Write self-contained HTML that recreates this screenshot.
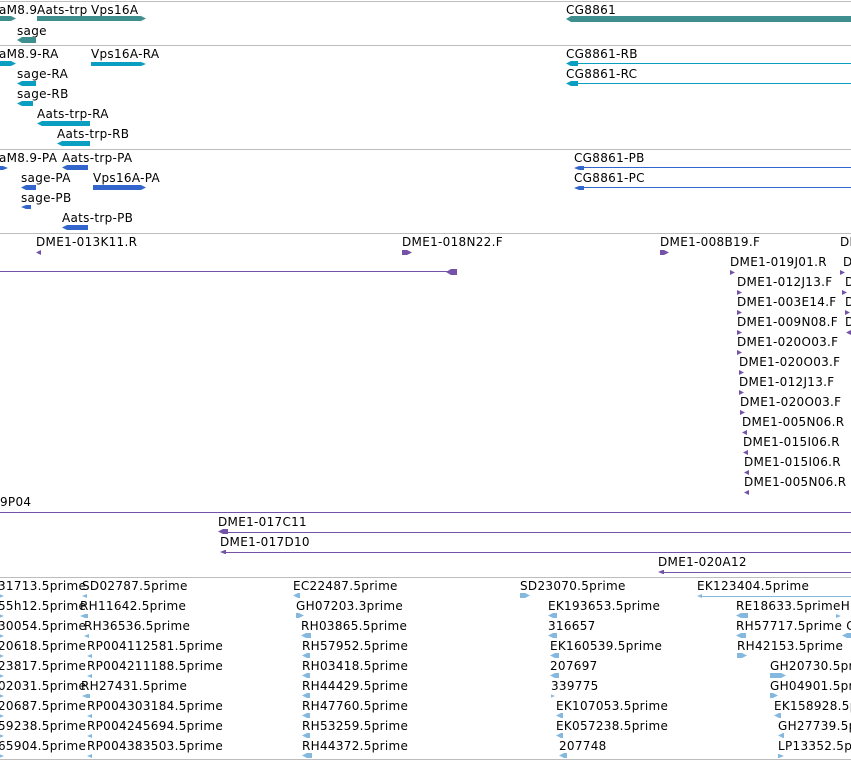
<!DOCTYPE html>
<html><head><meta charset="utf-8"><style>
body{margin:0;width:851px;height:761px;overflow:hidden;background:#fff;position:relative;font-family:"DejaVu Sans","Liberation Sans",sans-serif;}
.t{position:absolute;font-size:12px;line-height:14px;color:#000;white-space:nowrap;letter-spacing:0.3px;margin-top:1px;}
.s{position:absolute;height:1px;left:0;width:851px;background:#bdbdbd;}
.b{position:absolute;}
.g{background:#3f8f8f}.r{background:#0a9ec0}.p{background:#3366cc}.c{background:#7452a8}.e{background:#85b8de}
.ra{clip-path:polygon(0 0,calc(100% - 5px) 0,100% 50%,calc(100% - 5px) 100%,0 100%)}
.la{clip-path:polygon(5px 0,100% 0,100% 100%,5px 100%,0 50%)}
</style></head><body>
<div class="s" style="top:1px"></div>
<div class="s" style="top:45px"></div>
<div class="s" style="top:149px"></div>
<div class="s" style="top:233px"></div>
<div class="s" style="top:577px"></div>
<div class="s" style="top:759px"></div>

<div class="t" style="left:-1px;top:2px">aM8.9</div>
<div class="t" style="left:37px;top:2px">Aats-trp</div>
<div class="t" style="left:91px;top:2px">Vps16A</div>
<div class="b g ra" style="left:0;top:16px;width:16px;height:5px"></div>
<div class="b g ra" style="left:37px;top:16px;width:109px;height:5px"></div>
<div class="t" style="left:17px;top:23px">sage</div>
<div class="b g la" style="left:17px;top:37px;width:19px;height:6px"></div>
<div class="t" style="left:566px;top:2px">CG8861</div>
<div class="b g la" style="left:566px;top:16px;width:285px;height:6px"></div>

<div class="t" style="left:-1px;top:46px">aM8.9-RA</div>
<div class="b r ra" style="left:0;top:61px;width:16px;height:5px"></div>
<div class="t" style="left:91px;top:46px">Vps16A-RA</div>
<div class="b r ra" style="left:91px;top:62px;width:55px;height:4px"></div>
<div class="t" style="left:17px;top:66px">sage-RA</div>
<div class="b r la" style="left:17px;top:81px;width:19px;height:5px"></div>
<div class="t" style="left:17px;top:86px">sage-RB</div>
<div class="b r la" style="left:17px;top:101px;width:16px;height:5px"></div>
<div class="t" style="left:37px;top:106px">Aats-trp-RA</div>
<div class="b r la" style="left:37px;top:121px;width:53px;height:5px"></div>
<div class="t" style="left:57px;top:126px">Aats-trp-RB</div>
<div class="b r la" style="left:57px;top:141px;width:33px;height:5px"></div>
<div class="t" style="left:566px;top:46px">CG8861-RB</div>
<div class="b r la" style="left:566px;top:61px;width:12px;height:5px"></div>
<div class="b r" style="left:578px;top:63px;width:273px;height:1px"></div>
<div class="t" style="left:566px;top:66px">CG8861-RC</div>
<div class="b r la" style="left:566px;top:81px;width:12px;height:5px"></div>
<div class="b r" style="left:578px;top:83px;width:273px;height:1px"></div>

<div class="t" style="left:-1px;top:150px">aM8.9-PA</div>
<div class="b p ra" style="left:0;top:166px;width:8px;height:4px"></div>
<div class="t" style="left:62px;top:150px">Aats-trp-PA</div>
<div class="b p la" style="left:62px;top:165px;width:26px;height:5px"></div>
<div class="t" style="left:21px;top:170px">sage-PA</div>
<div class="b p la" style="left:21px;top:185px;width:15px;height:5px"></div>
<div class="t" style="left:93px;top:170px">Vps16A-PA</div>
<div class="b p ra" style="left:93px;top:185px;width:53px;height:5px"></div>
<div class="t" style="left:21px;top:190px">sage-PB</div>
<div class="b p la" style="left:21px;top:205px;width:10px;height:4px"></div>
<div class="t" style="left:62px;top:210px">Aats-trp-PB</div>
<div class="b p la" style="left:62px;top:225px;width:26px;height:5px"></div>
<div class="t" style="left:574px;top:150px">CG8861-PB</div>
<div class="b p la" style="left:574px;top:166px;width:10px;height:4px"></div>
<div class="b p" style="left:584px;top:167px;width:267px;height:1px"></div>
<div class="t" style="left:574px;top:170px">CG8861-PC</div>
<div class="b p la" style="left:574px;top:186px;width:10px;height:4px"></div>
<div class="b p" style="left:584px;top:187px;width:267px;height:1px"></div>

<div class="t" style="left:36px;top:234px">DME1-013K11.R</div>
<div class="b c la" style="left:36px;top:250px;width:5px;height:5px"></div>
<div class="t" style="left:402px;top:234px">DME1-018N22.F</div>
<div class="b c ra" style="left:402px;top:250px;width:10px;height:5px"></div>
<div class="b c" style="left:0;top:271px;width:450px;height:1px"></div>
<div class="b c la" style="left:446px;top:269px;width:11px;height:6px"></div>
<div class="t" style="left:660px;top:234px">DME1-008B19.F</div>
<div class="b c ra" style="left:660px;top:250px;width:9px;height:5px"></div>
<div class="t" style="left:840px;top:234px">DI</div>
<div class="t" style="left:730px;top:254px">DME1-019J01.R</div>
<div class="b c ra" style="left:730px;top:270px;width:5px;height:5px"></div>
<div class="t" style="left:737px;top:274px">DME1-012J13.F</div>
<div class="b c ra" style="left:737px;top:290px;width:5px;height:5px"></div>
<div class="t" style="left:737px;top:294px">DME1-003E14.F</div>
<div class="b c ra" style="left:737px;top:310px;width:5px;height:5px"></div>
<div class="t" style="left:737px;top:314px">DME1-009N08.F</div>
<div class="b c ra" style="left:737px;top:330px;width:5px;height:5px"></div>
<div class="t" style="left:737px;top:334px">DME1-020O03.F</div>
<div class="b c ra" style="left:737px;top:350px;width:5px;height:5px"></div>
<div class="t" style="left:739px;top:354px">DME1-020O03.F</div>
<div class="b c ra" style="left:739px;top:370px;width:5px;height:5px"></div>
<div class="t" style="left:739px;top:374px">DME1-012J13.F</div>
<div class="b c ra" style="left:739px;top:390px;width:5px;height:5px"></div>
<div class="t" style="left:740px;top:394px">DME1-020O03.F</div>
<div class="b c ra" style="left:740px;top:410px;width:5px;height:5px"></div>
<div class="t" style="left:742px;top:414px">DME1-005N06.R</div>
<div class="b c la" style="left:742px;top:430px;width:5px;height:5px"></div>
<div class="t" style="left:743px;top:434px">DME1-015I06.R</div>
<div class="b c la" style="left:743px;top:450px;width:5px;height:5px"></div>
<div class="t" style="left:744px;top:454px">DME1-015I06.R</div>
<div class="b c la" style="left:744px;top:470px;width:5px;height:5px"></div>
<div class="t" style="left:744px;top:474px">DME1-005N06.R</div>
<div class="b c la" style="left:744px;top:490px;width:5px;height:5px"></div>
<div class="t" style="left:843px;top:254px">D</div>
<div class="t" style="left:845px;top:274px">D</div>
<div class="t" style="left:845px;top:294px">D</div>
<div class="t" style="left:845px;top:314px">D</div>
<div class="b c ra" style="left:840px;top:270px;width:5px;height:5px"></div>
<div class="b c ra" style="left:842px;top:290px;width:5px;height:5px"></div>
<div class="b c ra" style="left:845px;top:310px;width:5px;height:5px"></div>
<div class="b c la" style="left:846px;top:330px;width:5px;height:5px"></div>
<div class="t" style="left:0;top:494px">9P04</div>
<div class="b c" style="left:0;top:512px;width:851px;height:1px"></div>
<div class="t" style="left:218px;top:514px">DME1-017C11</div>
<div class="b c la" style="left:218px;top:529px;width:10px;height:5px"></div>
<div class="b c" style="left:226px;top:532px;width:625px;height:1px"></div>
<div class="t" style="left:220px;top:534px">DME1-017D10</div>
<div class="b c la" style="left:220px;top:550px;width:6px;height:4px"></div>
<div class="b c" style="left:224px;top:552px;width:627px;height:1px"></div>
<div class="t" style="left:658px;top:554px">DME1-020A12</div>
<div class="b c la" style="left:658px;top:570px;width:6px;height:4px"></div>
<div class="b c" style="left:662px;top:572px;width:189px;height:1px"></div>

<div class="t" style="left:-2px;top:578px">31713.5prime</div>
<div class="t" style="left:-2px;top:598px">55h12.5prime</div>
<div class="t" style="left:-2px;top:618px">30054.5prime</div>
<div class="t" style="left:-2px;top:638px">20618.5prime</div>
<div class="t" style="left:-2px;top:658px">23817.5prime</div>
<div class="t" style="left:-2px;top:678px">02031.5prime</div>
<div class="t" style="left:-2px;top:698px">20687.5prime</div>
<div class="t" style="left:-2px;top:718px">59238.5prime</div>
<div class="t" style="left:-2px;top:738px">65904.5prime</div>
<div class="b e ra" style="left:0;top:594px;width:4px;height:4px"></div>
<div class="b e ra" style="left:0;top:614px;width:4px;height:4px"></div>
<div class="b e ra" style="left:0;top:634px;width:4px;height:4px"></div>
<div class="b e ra" style="left:0;top:654px;width:4px;height:4px"></div>
<div class="b e ra" style="left:0;top:674px;width:4px;height:4px"></div>
<div class="b e ra" style="left:0;top:694px;width:4px;height:4px"></div>
<div class="b e ra" style="left:0;top:714px;width:4px;height:4px"></div>
<div class="b e ra" style="left:0;top:734px;width:4px;height:4px"></div>
<div class="b e ra" style="left:0;top:754px;width:4px;height:4px"></div>

<div class="t" style="left:82px;top:578px">SD02787.5prime</div>
<div class="t" style="left:80px;top:598px">RH11642.5prime</div>
<div class="t" style="left:84px;top:618px">RH36536.5prime</div>
<div class="t" style="left:87px;top:638px">RP004112581.5prime</div>
<div class="t" style="left:87px;top:658px">RP004211188.5prime</div>
<div class="t" style="left:81px;top:678px">RH27431.5prime</div>
<div class="t" style="left:87px;top:698px">RP004303184.5prime</div>
<div class="t" style="left:87px;top:718px">RP004245694.5prime</div>
<div class="t" style="left:87px;top:738px">RP004383503.5prime</div>
<div class="b e la" style="left:82px;top:594px;width:5px;height:4px"></div>
<div class="b e la" style="left:80px;top:614px;width:8px;height:4px"></div>
<div class="b e la" style="left:84px;top:634px;width:5px;height:4px"></div>
<div class="b e la" style="left:87px;top:654px;width:5px;height:4px"></div>
<div class="b e la" style="left:87px;top:674px;width:5px;height:4px"></div>
<div class="b e la" style="left:82px;top:694px;width:8px;height:4px"></div>
<div class="b e la" style="left:87px;top:714px;width:5px;height:4px"></div>
<div class="b e la" style="left:87px;top:734px;width:5px;height:4px"></div>
<div class="b e la" style="left:87px;top:754px;width:5px;height:4px"></div>

<div class="t" style="left:293px;top:578px">EC22487.5prime</div>
<div class="t" style="left:296px;top:598px">GH07203.3prime</div>
<div class="t" style="left:301px;top:618px">RH03865.5prime</div>
<div class="t" style="left:302px;top:638px">RH57952.5prime</div>
<div class="t" style="left:302px;top:658px">RH03418.5prime</div>
<div class="t" style="left:302px;top:678px">RH44429.5prime</div>
<div class="t" style="left:302px;top:698px">RH47760.5prime</div>
<div class="t" style="left:302px;top:718px">RH53259.5prime</div>
<div class="t" style="left:302px;top:738px">RH44372.5prime</div>
<div class="b e la" style="left:293px;top:593px;width:7px;height:5px"></div>
<div class="b e ra" style="left:296px;top:613px;width:8px;height:5px"></div>
<div class="b e la" style="left:301px;top:633px;width:10px;height:5px"></div>
<div class="b e la" style="left:302px;top:653px;width:8px;height:5px"></div>
<div class="b e la" style="left:302px;top:673px;width:8px;height:5px"></div>
<div class="b e la" style="left:302px;top:693px;width:8px;height:5px"></div>
<div class="b e la" style="left:302px;top:713px;width:8px;height:5px"></div>
<div class="b e la" style="left:302px;top:733px;width:8px;height:5px"></div>
<div class="b e la" style="left:302px;top:753px;width:10px;height:5px"></div>

<div class="t" style="left:520px;top:578px">SD23070.5prime</div>
<div class="t" style="left:548px;top:598px">EK193653.5prime</div>
<div class="t" style="left:548px;top:618px">316657</div>
<div class="t" style="left:550px;top:638px">EK160539.5prime</div>
<div class="t" style="left:550px;top:658px">207697</div>
<div class="t" style="left:551px;top:678px">339775</div>
<div class="t" style="left:556px;top:698px">EK107053.5prime</div>
<div class="t" style="left:556px;top:718px">EK057238.5prime</div>
<div class="t" style="left:559px;top:738px">207748</div>
<div class="b e ra" style="left:520px;top:593px;width:10px;height:5px"></div>
<div class="b e la" style="left:548px;top:613px;width:9px;height:5px"></div>
<div class="b e la" style="left:548px;top:633px;width:9px;height:5px"></div>
<div class="b e la" style="left:550px;top:653px;width:9px;height:5px"></div>
<div class="b e la" style="left:550px;top:673px;width:9px;height:5px"></div>
<div class="b e ra" style="left:551px;top:694px;width:4px;height:4px"></div>
<div class="b e la" style="left:556px;top:713px;width:7px;height:5px"></div>
<div class="b e la" style="left:556px;top:733px;width:7px;height:5px"></div>
<div class="b e la" style="left:559px;top:753px;width:8px;height:5px"></div>

<div class="t" style="left:697px;top:578px">EK123404.5prime</div>
<div class="b e la" style="left:697px;top:594px;width:5px;height:4px"></div>
<div class="b e" style="left:700px;top:596px;width:151px;height:1px"></div>
<div class="t" style="left:736px;top:598px">RE18633.5primeHL</div>
<div class="t" style="left:736px;top:618px">RH57717.5prime C.</div>
<div class="t" style="left:737px;top:638px">RH42153.5prime</div>
<div class="t" style="left:770px;top:658px">GH20730.5pr</div>
<div class="t" style="left:770px;top:678px">GH04901.5pr</div>
<div class="t" style="left:774px;top:698px">EK158928.5p</div>
<div class="t" style="left:778px;top:718px">GH27739.5p</div>
<div class="t" style="left:778px;top:738px">LP13352.5p</div>
<div class="b e la" style="left:736px;top:613px;width:12px;height:5px"></div>
<div class="b e ra" style="left:836px;top:614px;width:5px;height:4px"></div>
<div class="b e la" style="left:736px;top:633px;width:10px;height:5px"></div>
<div class="b e la" style="left:842px;top:633px;width:9px;height:5px"></div>
<div class="b e ra" style="left:737px;top:653px;width:10px;height:5px"></div>
<div class="b e ra" style="left:770px;top:673px;width:16px;height:5px"></div>
<div class="b e ra" style="left:770px;top:693px;width:8px;height:5px"></div>
<div class="b e la" style="left:774px;top:713px;width:7px;height:5px"></div>
<div class="b e la" style="left:778px;top:733px;width:6px;height:5px"></div>
<div class="b e ra" style="left:778px;top:754px;width:6px;height:4px"></div>
</body></html>
